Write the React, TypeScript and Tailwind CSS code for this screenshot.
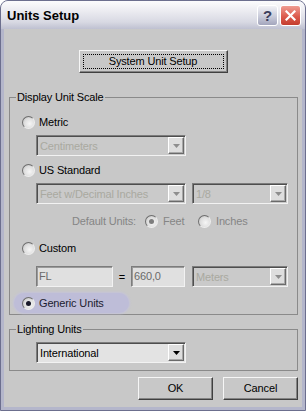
import React from 'react';

// Units Setup dialog, XP silver frame around a classic grey client area

type ComboProps = { text: string; className: string; disabled?: boolean };

const Arrow: React.FC<{ disabled?: boolean }> = ({ disabled }) => (
  <span className="ml-auto flex h-[17px] w-[16px] items-center justify-center border border-t-[#ffffff] border-l-[#ffffff] border-b-[#6a6a6a] border-r-[#6a6a6a] bg-[#dedede] shadow-[inset_-1px_-1px_0_#a8a8a8]">
    <svg width="7" height="4" viewBox="0 0 7 4">
      <polygon points="0,0 7,0 3.5,4" fill={disabled ? '#8e8e8e' : '#000000'} />
    </svg>
  </span>
);

const Combo: React.FC<ComboProps> = ({ text, className, disabled }) => (
  <div
    className={`flex h-[21px] items-center border border-t-[#7c7c7c] border-l-[#7c7c7c] border-b-[#f2f2f2] border-r-[#f2f2f2] pr-[1px] shadow-[inset_1px_1px_0_#4e4e4e] ${
      disabled ? 'bg-[#cacaca] text-[#a9a9a0]' : 'bg-[#e3e3e3] text-black'
    } ${className}`}
  >
    <span className="pl-[3px] pt-[1px]">{text}</span>
    <Arrow disabled={disabled} />
  </div>
);

const Field: React.FC<{ text: string; className: string }> = ({ text, className }) => (
  <div
    className={`flex h-[21px] items-center border border-t-[#7c7c7c] border-l-[#7c7c7c] border-b-[#f2f2f2] border-r-[#f2f2f2] bg-[#e0e0e0] pl-[2px] text-[#6a6a6a] shadow-[inset_1px_1px_0_#9a9a9a] ${className}`}
  >
    {text}
  </div>
);

const Radio: React.FC<{ checked?: boolean; disabled?: boolean }> = ({ checked, disabled }) => (
  <span className="flex h-[13px] w-[13px] shrink-0 items-center justify-center rounded-full border border-t-[#6e6e6e] border-l-[#6e6e6e] border-b-[#eeeeee] border-r-[#eeeeee] bg-[radial-gradient(circle_at_60%_60%,#f6f6f6_0%,#dedede_55%,#b4b4b4_100%)]">
    {checked && (
      <span className={`h-[5px] w-[5px] rounded-full ${disabled ? 'bg-[#7e7e7e]' : 'bg-[#1a1a2a]'}`} />
    )}
  </span>
);

const RadioRow: React.FC<{ label: string; className: string }> = ({ label, className }) => (
  <div className={`flex h-[16px] items-center gap-[4px] ${className}`}>
    <Radio />
    <span className="text-black">{label}</span>
  </div>
);

const Button: React.FC<{ label: string; className: string; focused?: boolean }> = ({ label, className, focused }) => (
  <div
    className={`flex h-[23px] border border-t-[#f6f6f6] border-l-[#f6f6f6] border-b-[#404040] border-r-[#404040] bg-[#c8c8c8] p-[3px] shadow-[inset_-1px_-1px_0_#848484] ${className}`}
  >
    <span
      className={`flex flex-1 items-center justify-center border ${
        focused ? 'border-dotted border-black' : 'border-transparent'
      }`}
    >
      {label}
    </span>
  </div>
);

export default function App() {
  return (
    <div className="h-[411px] w-[306px] bg-white font-['Liberation_Sans',Arial,sans-serif] text-[11px] leading-none tracking-[-0.15px] text-black">
      <div className="flex h-full flex-col overflow-hidden rounded-t-[8px] border border-[#6c6f8e] bg-[#b4b6cb]">
        {/* title bar */}
        <div className="flex h-[28px] shrink-0 items-center bg-[linear-gradient(to_bottom,#fcfcfd_0%,#ececf1_35%,#d8d9e3_75%,#bfc1d1_100%)] pl-[6px] pr-[4px]">
          <span className="text-[13px] font-bold tracking-normal text-black">Units Setup</span>
          <div className="ml-auto flex gap-[2px] pt-[1px]">
            <div className="flex h-[21px] w-[21px] items-center justify-center rounded-[3px] border border-white bg-[linear-gradient(to_bottom,#f2f2f6_0%,#c9cbda_55%,#a3a6bd_100%)] text-[15px] font-bold text-[#3b3e5c]">
              ?
            </div>
            <div className="flex h-[21px] w-[21px] items-center justify-center rounded-[3px] border border-white bg-[linear-gradient(to_bottom,#ef9d92_0%,#dc5b4d_55%,#c43c2f_100%)]">
              <svg width="11" height="11" viewBox="0 0 11 11">
                <path d="M1.5 1.5 L9.5 9.5 M9.5 1.5 L1.5 9.5" stroke="#ffffff" strokeWidth="2.2" strokeLinecap="square" />
              </svg>
            </div>
          </div>
        </div>

        {/* client area */}
        <div className="mx-[3px] mb-[3px] flex flex-1 flex-col bg-[#c8c8c8]">
          <Button label="System Unit Setup" focused className="mx-auto mt-[21px] w-[149px]" />

          <fieldset className="ml-[5px] mr-[4px] mt-[17px] border border-[#8a8a8a]">
            <legend className="ml-[6px] px-[1px] leading-[14px]">Display Unit Scale</legend>
            <div className="flex flex-col pb-[1px] pl-[12px] pt-[10px]">
              <RadioRow label="Metric" className="" />
              <Combo text="Centimeters" disabled className="ml-[14px] mt-[5px] w-[150px]" />
              <RadioRow label="US Standard" className="mt-[6px]" />
              <div className="ml-[14px] mt-[5px] flex gap-[6px]">
                <Combo text="Feet w/Decimal Inches" disabled className="w-[150px]" />
                <Combo text="1/8" disabled className="w-[96px]" />
              </div>
              <div className="ml-[50px] mt-[9px] flex h-[16px] items-center text-[#858585]">
                <span className="w-[73px]">Default Units:</span>
                <Radio checked disabled />
                <span className="ml-[5px] w-[35px]">Feet</span>
                <Radio />
                <span className="ml-[5px]">Inches</span>
              </div>
              <RadioRow label="Custom" className="mt-[11px]" />
              <div className="ml-[14px] mt-[10px] flex items-center">
                <Field text="FL" className="w-[77px]" />
                <span className="w-[18px] pt-[2px] text-center">=</span>
                <Field text="660,0" className="w-[54px]" />
                <Combo text="Meters" disabled className="ml-[7px] w-[96px]" />
              </div>
              <div className="-ml-[8px] mt-[6px] flex h-[20px] w-[115px] items-center gap-[4px] rounded-full bg-[#bebdd8] pl-[8px] shadow-[0_0_2px_1px_#c4c3d8]">
                <Radio checked />
                <span className="text-[#1c1c30]">Generic Units</span>
              </div>
            </div>
          </fieldset>

          <fieldset className="ml-[5px] mr-[4px] mt-[7px] border border-[#8a8a8a]">
            <legend className="ml-[6px] px-[1px] leading-[14px]">Lighting Units</legend>
            <div className="pb-[7px] pl-[26px] pt-[6px]">
              <Combo text="International" className="w-[150px]" />
            </div>
          </fieldset>

          <div className="mr-[4px] mt-[6px] flex justify-end gap-[10px]">
            <Button label="OK" className="w-[75px]" />
            <Button label="Cancel" className="w-[75px]" />
          </div>
        </div>
      </div>
    </div>
  );
}
